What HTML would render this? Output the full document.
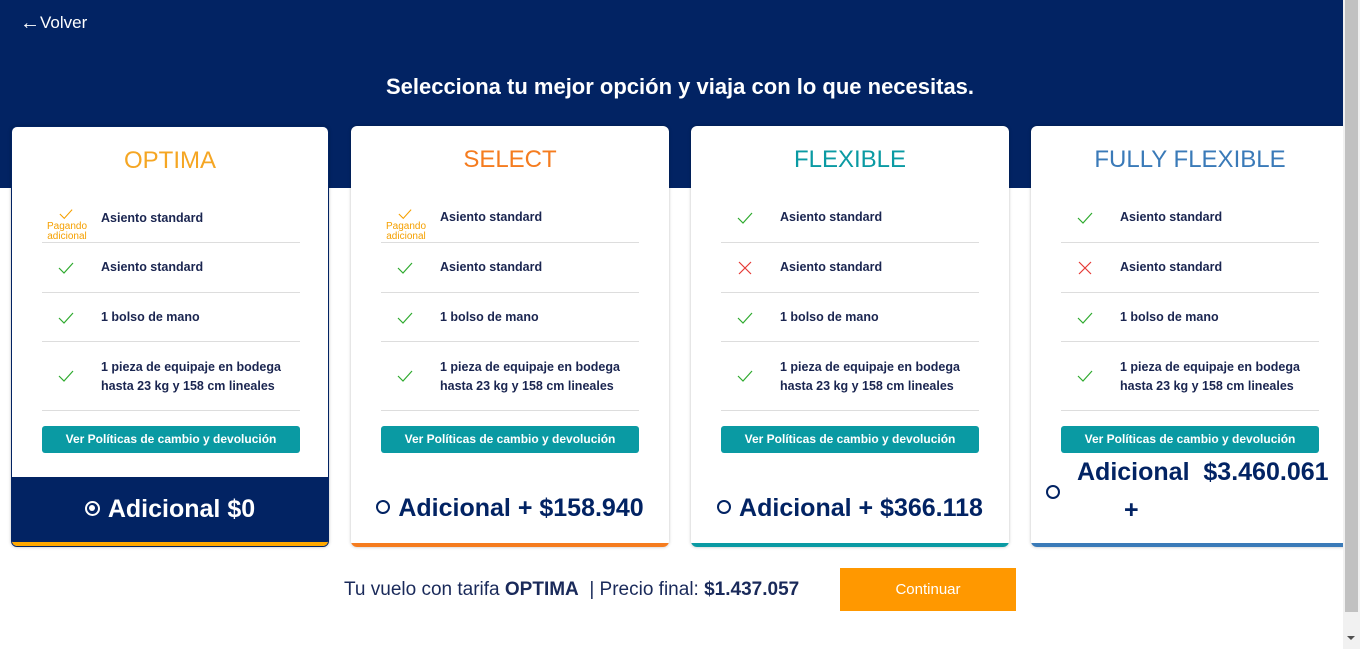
<!DOCTYPE html>
<html><head><meta charset="utf-8"><style>
*{box-sizing:border-box;margin:0;padding:0}
body{width:1360px;height:649px;overflow:hidden;background:#fff;font-family:"Liberation Sans",Arial,sans-serif;position:relative}
.top{position:absolute;left:0;top:0;width:1343px;height:188px;background:#022363}
.back{position:absolute;left:20px;top:11px;color:#fff;font-size:17px}
h1{position:absolute;left:0;width:1360px;top:74px;text-align:center;color:#fff;font-size:22px;font-weight:bold}
.card{position:absolute;top:126px;width:318px;height:421px;background:#fff;border-radius:6px;box-shadow:0 0 3px rgba(0,0,0,.25);overflow:hidden}
.card h2{position:absolute;font-weight:normal;font-size:24px;text-align:center;width:100%;top:20px}
.row{position:absolute;left:30px;width:258px;border-bottom:1px solid #ddd;font-size:12.5px;font-weight:bold;color:#1a2550}
.row .t{position:absolute;left:59px}
.ic{position:absolute;left:16px;width:16px;height:16px}
.pg{position:absolute;left:1px;top:29px;width:48px;text-align:center;color:#f5a000;font-size:10px;line-height:10px;font-weight:normal}
.btn{position:absolute;left:30px;top:300px;width:258px;height:27px;background:#0a9aa3;border-radius:3px;color:#fff;font-size:12px;font-weight:bold;text-align:center;line-height:27px}
.price{position:absolute;left:0;width:100%;top:368px;text-align:center;font-size:25px;font-weight:bold;color:#022363}
.rad{display:inline-block;width:14px;height:14px;border:2px solid #022363;border-radius:50%;vertical-align:middle;margin-right:8px;position:relative;top:-2px}
.bb{position:absolute;left:0;bottom:0;width:100%;height:4px}
</style></head><body>
<div class="top"></div>
<div class="back"><span style="font-size:20px;position:relative;top:1px">&#8592;</span>Volver</div>
<h1>Selecciona tu mejor opción y viaja con lo que necesitas.</h1>

<div class="card" style="left:11px;border:1px solid #022363">
<h2 style="color:#f5a623">OPTIMA</h2>
<div class="row" style="top:66px;height:50px"><svg class="ic" style="top:14px;left:17px;width:14px;height:14px" viewBox="0 0 16 16"><path d="M1 8l5 5 9-10" fill="none" stroke="#f5a000" stroke-width="1.2"/></svg><div class="pg">Pagando adicional</div><span class="t" style="top:18px">Asiento standard</span></div>
<div class="row" style="top:116px;height:50px"><svg class="ic" style="top:17px" viewBox="0 0 16 16"><path d="M1 8l5 5 9-10" fill="none" stroke="#2eaa2e" stroke-width="1.2"/></svg><span class="t" style="top:17px">Asiento standard</span></div>
<div class="row" style="top:166px;height:49px"><svg class="ic" style="top:17px" viewBox="0 0 16 16"><path d="M1 8l5 5 9-10" fill="none" stroke="#2eaa2e" stroke-width="1.2"/></svg><span class="t" style="top:17px">1 bolso de mano</span></div>
<div class="row" style="top:215px;height:69px"><svg class="ic" style="top:26px" viewBox="0 0 16 16"><path d="M1 8l5 5 9-10" fill="none" stroke="#2eaa2e" stroke-width="1.2"/></svg><span class="t" style="top:16px;line-height:19px">1 pieza de equipaje en bodega<br>hasta 23 kg y 158 cm lineales</span></div>
<div class="btn" style="top:299px">Ver Políticas de cambio y devolución</div>
<div style="position:absolute;left:0;top:350px;width:100%;height:67px;background:#022363"></div>
<div class="price" style="color:#fff;top:368px"><span class="rad" style="border-color:#fff;width:15px;height:15px"><span style="position:absolute;left:2.5px;top:2.5px;width:6px;height:6px;background:#fff;border-radius:50%"></span></span>Adicional $0</div>
<div class="bb" style="background:#ffa800"></div>
</div>

<div class="card" style="left:351px">
<h2 style="color:#f57c1f">SELECT</h2>
<div class="row" style="top:67px;height:50px"><svg class="ic" style="top:14px;left:17px;width:14px;height:14px" viewBox="0 0 16 16"><path d="M1 8l5 5 9-10" fill="none" stroke="#f5a000" stroke-width="1.2"/></svg><div class="pg">Pagando adicional</div><span class="t" style="top:17px">Asiento standard</span></div>
<div class="row" style="top:117px;height:50px"><svg class="ic" style="top:17px" viewBox="0 0 16 16"><path d="M1 8l5 5 9-10" fill="none" stroke="#2eaa2e" stroke-width="1.2"/></svg><span class="t" style="top:17px">Asiento standard</span></div>
<div class="row" style="top:167px;height:49px"><svg class="ic" style="top:17px" viewBox="0 0 16 16"><path d="M1 8l5 5 9-10" fill="none" stroke="#2eaa2e" stroke-width="1.2"/></svg><span class="t" style="top:17px">1 bolso de mano</span></div>
<div class="row" style="top:216px;height:69px"><svg class="ic" style="top:26px" viewBox="0 0 16 16"><path d="M1 8l5 5 9-10" fill="none" stroke="#2eaa2e" stroke-width="1.2"/></svg><span class="t" style="top:16px;line-height:19px">1 pieza de equipaje en bodega<br>hasta 23 kg y 158 cm lineales</span></div>
<div class="btn">Ver Políticas de cambio y devolución</div>
<div class="price"><span class="rad"></span>Adicional + $158.940</div>
<div class="bb" style="background:#f57c1f"></div>
</div>

<div class="card" style="left:691px">
<h2 style="color:#0a9aa3">FLEXIBLE</h2>
<div class="row" style="top:67px;height:50px"><svg class="ic" style="top:17px" viewBox="0 0 16 16"><path d="M1 8l5 5 9-10" fill="none" stroke="#2eaa2e" stroke-width="1.2"/></svg><span class="t" style="top:17px">Asiento standard</span></div>
<div class="row" style="top:117px;height:50px"><svg class="ic" style="top:17px" viewBox="0 0 16 16"><path d="M2 2l12 12M14 2L2 14" fill="none" stroke="#e53935" stroke-width="1.2"/></svg><span class="t" style="top:17px">Asiento standard</span></div>
<div class="row" style="top:167px;height:49px"><svg class="ic" style="top:17px" viewBox="0 0 16 16"><path d="M1 8l5 5 9-10" fill="none" stroke="#2eaa2e" stroke-width="1.2"/></svg><span class="t" style="top:17px">1 bolso de mano</span></div>
<div class="row" style="top:216px;height:69px"><svg class="ic" style="top:26px" viewBox="0 0 16 16"><path d="M1 8l5 5 9-10" fill="none" stroke="#2eaa2e" stroke-width="1.2"/></svg><span class="t" style="top:16px;line-height:19px">1 pieza de equipaje en bodega<br>hasta 23 kg y 158 cm lineales</span></div>
<div class="btn">Ver Políticas de cambio y devolución</div>
<div class="price"><span class="rad"></span>Adicional + $366.118</div>
<div class="bb" style="background:#0a9aa3"></div>
</div>

<div class="card" style="left:1031px;width:330px">
<h2 style="color:#3a7ab8;width:318px">FULLY FLEXIBLE</h2>
<div class="row" style="top:67px;height:50px"><svg class="ic" style="top:17px" viewBox="0 0 16 16"><path d="M1 8l5 5 9-10" fill="none" stroke="#2eaa2e" stroke-width="1.2"/></svg><span class="t" style="top:17px">Asiento standard</span></div>
<div class="row" style="top:117px;height:50px"><svg class="ic" style="top:17px" viewBox="0 0 16 16"><path d="M2 2l12 12M14 2L2 14" fill="none" stroke="#e53935" stroke-width="1.2"/></svg><span class="t" style="top:17px">Asiento standard</span></div>
<div class="row" style="top:167px;height:49px"><svg class="ic" style="top:17px" viewBox="0 0 16 16"><path d="M1 8l5 5 9-10" fill="none" stroke="#2eaa2e" stroke-width="1.2"/></svg><span class="t" style="top:17px">1 bolso de mano</span></div>
<div class="row" style="top:216px;height:69px"><svg class="ic" style="top:26px" viewBox="0 0 16 16"><path d="M1 8l5 5 9-10" fill="none" stroke="#2eaa2e" stroke-width="1.2"/></svg><span class="t" style="top:16px;line-height:19px">1 pieza de equipaje en bodega<br>hasta 23 kg y 158 cm lineales</span></div>
<div class="btn">Ver Políticas de cambio y devolución</div>
<span class="rad" style="position:absolute;left:15px;top:359px"></span>
<div style="position:absolute;left:46px;top:332px;font-size:25px;font-weight:bold;color:#022363;white-space:nowrap">Adicional&nbsp; $3.460.061</div>
<div style="position:absolute;left:93px;top:370px;font-size:25px;font-weight:bold;color:#022363">+</div>
<div class="bb" style="background:#3a7ab8"></div>
</div>

<div style="position:absolute;left:344px;top:579px;font-size:19px;color:#1a2a5a">Tu vuelo con tarifa <b>OPTIMA</b> &nbsp;| Precio final: <b style="font-size:19px">$1.437.057</b></div>
<div style="position:absolute;left:840px;top:568px;width:176px;height:43px;background:#ff9800;color:#fff;font-size:15px;text-align:center;line-height:43px">Continuar</div>

<div style="position:absolute;left:1343px;top:0;width:17px;height:649px;background:#f1f1f1"></div>
<div style="position:absolute;left:1345px;top:0;width:13px;height:612px;background:#c1c1c1"></div>
<div style="position:absolute;left:1347px;top:636px;width:0;height:0;border-left:4px solid transparent;border-right:4px solid transparent;border-top:4px solid #505050"></div>
</body></html>
